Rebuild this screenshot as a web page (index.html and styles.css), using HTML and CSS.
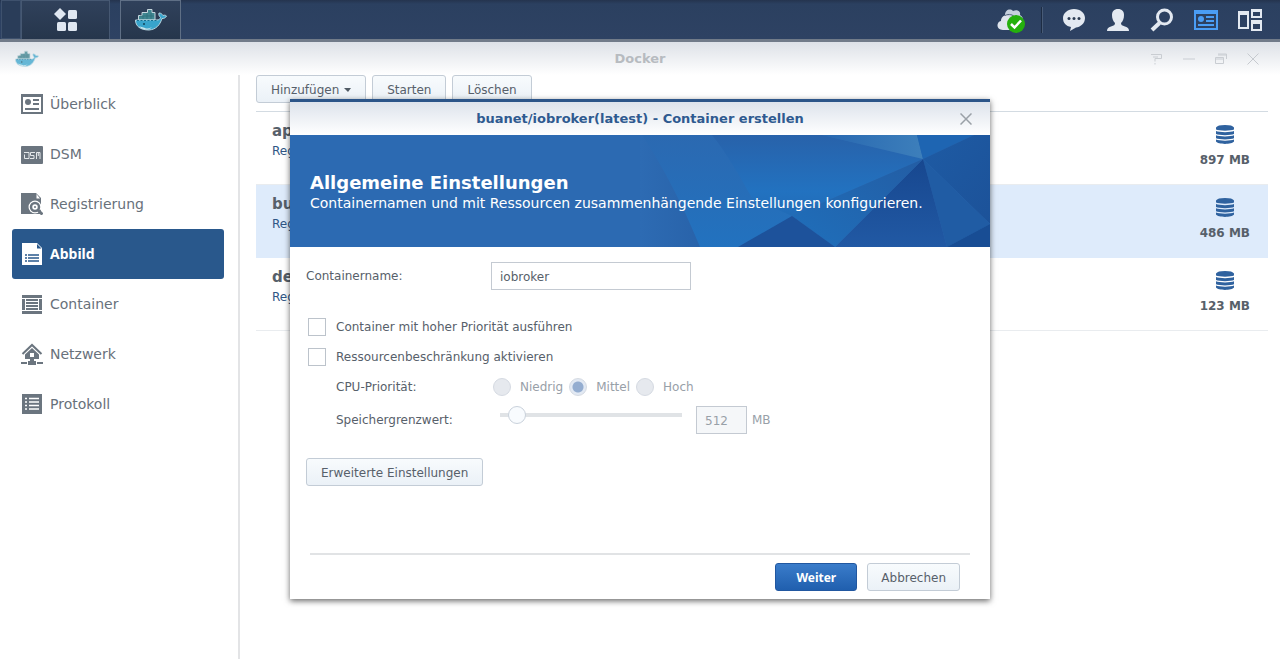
FILE: index.html
```html
<!DOCTYPE html>
<html lang="de">
<head>
<meta charset="utf-8">
<title>Docker</title>
<link rel="stylesheet" href="styles.css">
</head>
<body>
<svg class="defs" width="0" height="0" aria-hidden="true">
  <defs>
    <symbol id="whale" viewBox="0 0 32 24">
      <path d="M3.500 12V7.500H7V4.500h5.500V1.500H17v3h3v7.500z" fill="#3f8691" stroke="#c4d5dc" stroke-width="1"/>
      <path d="M8 8v3M12 5v6M16 5v6M5 8h14" stroke="#2b6d7a" stroke-width=".7"/>
      <path d="M.5 12H22c2 0 3-1 3.500-2.500-1.500-1.500-2-3-1.500-4.500 2 0 3 1 4 2.500 1-.5 2.500-.5 3.500.5-1 2-2.500 2.500-4.500 2.500-2 6.500-6 11-13 11.500C5 22 .5 18 .5 12z" fill="#38a4cc" stroke="#b9d6e0" stroke-width="1"/>
      <path d="M2 12.500h20" stroke="#177091" stroke-dasharray="2 1.500"/>
      <path d="M4 18c2 1.500 5 1 7 2.500 2.500 0 4-.5 6-1.500-2 2-4 2.700-6.500 2.500-3-.3-5-1.500-6.500-3.500z" fill="#cbe6ed"/>
      <circle cx="9" cy="16" r="1" fill="#124558"/>
    </symbol>
    <symbol id="disk" viewBox="0 0 18 19">
      <path d="M0 2.500C1 .8 4 0 9 0s8 .8 9 2.500v2C15 6 3 6 0 4.500zM0 6c3 1.500 15 1.500 18 0v3c-3 1.500-15 1.500-18 0zM0 10.300c3 1.500 15 1.500 18 0v3c-3 1.500-15 1.500-18 0zM0 14.500c3 1.500 15 1.500 18 0v2c-2 3.200-16 3.200-18 0z" fill="#2f629f"/>
    </symbol>
  </defs>
</svg>

<header class="taskbar">
  <span class="task-edge"></span>
  <button class="task task-menu" aria-label="Hauptmenü">
    <svg width="24" height="24" viewBox="0 0 24 24" fill="#dfe7f1"><path d="M6 0l6 6-6 6-6-6z"/><rect x="14" y="2" width="9" height="9" rx="1.500"/><rect x="3" y="14" width="9" height="9" rx="1.500"/><rect x="14" y="14" width="9" height="9" rx="1.500"/></svg>
  </button>
  <button class="task task-app" aria-label="Docker öffnen"><svg width="32" height="24"><use href="#whale"/></svg></button>
  <div class="tray">
    <button class="tray-btn" aria-label="Cloud-Status">
      <svg width="30" height="28" viewBox="0 0 30 28"><path d="M8 9c0-5 5-7 8-4 4-2 8 0 7 4 4 2 4 7 1 9H10z" fill="#c6d0dd"/><path d="M6 24c-7 0-7-8-2-9 0-5 5-7 9-4 5-2 9 1 8 6l-1 7z" fill="#dfe5ed"/><path d="M8 9.500c4-2 8-1 10 2" stroke="#53647c" fill="none"/><circle cx="19" cy="18" r="9" fill="#25b00d"/><path d="M14 18l3.500 3.500L24 14.500" fill="none" stroke="#fff" stroke-width="2.500"/></svg>
    </button>
    <span class="tray-sep"></span>
    <button class="tray-btn" aria-label="Chat"><svg width="24" height="24" viewBox="0 0 24 24"><path d="M12 1c6.500 0 11 4 11 9 0 6-5 9-9 9.500L8 23l1-4C4 18 1 15 1 10c0-5 5-9 11-9z" fill="#e3e9f1"/><circle cx="7" cy="10.500" r="1.500" fill="#2b3b52"/><circle cx="12" cy="10.500" r="1.500" fill="#2b3b52"/><circle cx="17" cy="10.500" r="1.500" fill="#2b3b52"/></svg></button>
    <button class="tray-btn" aria-label="Optionen"><svg width="24" height="24" viewBox="0 0 24 24"><path d="M12 1c4 0 6 2.500 6 6s-1 6-3 8c0 2 1 2.500 4 3.500 3 1 4 2 4 4.500H1c0-2.500 1-3.500 4-4.500 3-1 4-1.500 4-3.500-2-2-3-4.500-3-8s2-6 6-6z" fill="#e3e9f1"/></svg></button>
    <button class="tray-btn" aria-label="Suche"><svg width="24" height="24" viewBox="0 0 24 24" fill="none" stroke="#e3e9f1"><circle cx="14.500" cy="9" r="7" stroke-width="3"/><path d="M9.500 15L2 22" stroke-width="4"/></svg></button>
    <button class="tray-btn" aria-label="Widgets"><svg width="24" height="22" viewBox="0 0 24 22"><path d="M0 1h24v20H0zM2 5v14h20V5z" fill="#4a9df5" fill-rule="evenodd"/><circle cx="7" cy="10" r="3" fill="#4a9df5"/><path d="M12 8h8M12 12h8M4 16h16" stroke="#4a9df5" stroke-width="2"/></svg></button>
    <button class="tray-btn" aria-label="Fensterübersicht"><svg width="24" height="24" viewBox="0 0 24 24" fill="#e3e9f1" fill-rule="evenodd"><path d="M0 3h11v18H0zM2 7v12h7V7zM13 1h11v9H13zM15 4v4h7V4zM13 12h11v11H13zM15 16v5h7v-5z"/></svg></button>
  </div>
</header>

<main class="window">
  <div class="window-head">
    <svg class="window-logo" width="24" height="18"><use href="#whale"/></svg>
    <h1 class="window-title">Docker</h1>
    <div class="window-tools">
      <button aria-label="Hilfe"><svg width="12" height="12" viewBox="0 0 12 12"><path d="M0 1.500h10.500v4H4v3M4 10v1.500M2 4h5" stroke="#c9cdd2" stroke-width="1" fill="none"/></svg></button>
      <button aria-label="Minimieren"><svg width="12" height="12" viewBox="0 0 12 12"><path d="M0 6h12" stroke="#c9cdd2"/></svg></button>
      <button aria-label="Wiederherstellen"><svg width="12" height="12" viewBox="0 0 12 12"><path d="M3 1h8.500v5M3 2h8M.5 4.500h8v6h-8zM.5 6h8" stroke="#c9cdd2" fill="none"/></svg></button>
      <button aria-label="Schließen"><svg width="12" height="12" viewBox="0 0 12 12"><path d="M.5.5l11 11M11.500.5l-11 11" stroke="#c6cacf"/></svg></button>
    </div>
  </div>

  <div class="window-body">
    <nav class="sidebar">
      <a class="nav-item" href="#ueberblick"><svg width="22" height="22" viewBox="0 0 22 22" fill="#6b757f"><path d="M0 1h22v20H0zM2 4v15h18V4z" fill-rule="evenodd"/><circle cx="7" cy="9" r="3"/><path d="M12 6h6v2h-6zM12 10h6v2h-6zM4 15h14v2H4z"/></svg>Überblick</a>
      <a class="nav-item" href="#dsm"><svg width="22" height="22" viewBox="0 0 22 22"><rect y="3" width="22" height="18" rx="1" fill="#6b757f"/><path d="M3 9.500h5v6H3.500v-4M14 9.500H9.500v3h3.500v3H9M15.500 16V9.500H19V16M17.300 9.500V13" fill="none" stroke="#e4e8eb"/></svg>DSM</a>
      <a class="nav-item" href="#registrierung"><svg width="22" height="22" viewBox="0 0 22 22"><path d="M0 0h15l5 5v16H0z" fill="#6b757f"/><path d="M15.500 1v4.500H19z" fill="#fff"/><circle cx="14" cy="14" r="6.500" fill="#fff"/><circle cx="14" cy="14" r="4" fill="none" stroke="#6b757f" stroke-width="2.500"/><circle cx="14" cy="14" r="1" fill="#6b757f"/><path d="M17 17l4.500 4.500" stroke="#6b757f" stroke-width="3"/></svg>Registrierung</a>
      <a class="nav-item nav-item-active" href="#abbild"><svg width="22" height="22" viewBox="0 0 22 22"><path d="M1 0h15l5 5v17H1z" fill="#fff"/><path d="M16 1v4.500h4.500z" fill="#29588c"/><path d="M4 12h2M7 12h11M4 15h2M7 15h11M4 18h2M7 18h11" stroke="#29588c" stroke-width="1.500"/></svg>Abbild</a>
      <a class="nav-item" href="#container"><svg width="22" height="22" viewBox="0 0 22 22" fill="#6b757f"><path d="M1 2h20v3H1zM1 18h20v3H1zM1 6h3v11H1zM18 6h3v11h-3zM5 6h12v2H5zM5 9h12v2H5zM5 12h12v2H5zM5 15h12v2H5z"/></svg>Container</a>
      <a class="nav-item" href="#netzwerk"><svg width="22" height="22" viewBox="0 0 22 22"><path d="M1.500 11L11 2l9.500 9" fill="none" stroke="#6b757f" stroke-width="2"/><path d="M11 5l7 6.500V16h-5v2H9v-2H4v-4.500zM9 10v4h4v-4z" fill="#6b757f" fill-rule="evenodd"/><path d="M0 20h6M16 20h6" stroke="#6b757f" stroke-width="2"/><path d="M7 18h8v4H7z" fill="#6b757f"/></svg>Netzwerk</a>
      <a class="nav-item" href="#protokoll"><svg width="22" height="22" viewBox="0 0 22 22"><path d="M1 1h20v20H1z" fill="#6b757f"/><path d="M4 5.500h2M8 5.500h10M4 9h2M8 9h10M4 12.500h2M8 12.500h10M4 16h2M8 16h10" stroke="#fff" stroke-width="1.700"/></svg>Protokoll</a>
    </nav>

    <section class="content">
      <div class="toolbar">
        <button class="btn">Hinzufügen <span class="caret"></span></button>
        <button class="btn">Starten</button>
        <button class="btn">Löschen</button>
      </div>
      <ul class="images">
        <li class="image"><div><h2 class="image-name">ap</h2><a class="image-link" href="#ap">Reg</a></div><div class="image-size"><svg width="18" height="19"><use href="#disk"/></svg>897 MB</div></li>
        <li class="image image-selected"><div><h2 class="image-name">bu</h2><a class="image-link" href="#bu">Reg</a></div><div class="image-size"><svg width="18" height="19"><use href="#disk"/></svg>486 MB</div></li>
        <li class="image"><div><h2 class="image-name">de</h2><a class="image-link" href="#de">Reg</a></div><div class="image-size"><svg width="18" height="19"><use href="#disk"/></svg>123 MB</div></li>
      </ul>
    </section>
  </div>
</main>

<section class="dialog" role="dialog" aria-labelledby="dialog-title">
  <header class="dialog-head">
    <h2 class="dialog-title" id="dialog-title">buanet/iobroker(latest) - Container erstellen</h2>
    <button class="dialog-close" aria-label="Dialog schließen"><svg width="12" height="12" viewBox="0 0 12 12"><path d="M.5.5l11 11M11.500.5l-11 11" stroke="#9aa0a7" stroke-width="1.500"/></svg></button>
  </header>
  <div class="banner">
    <svg class="banner-art" width="350" height="112" viewBox="0 0 350 112" aria-hidden="true">
      <defs>
        <linearGradient id="g0" x1="0" y1="0" x2="1" y2="0"><stop offset="0" stop-color="#2d6bb3"/><stop offset="1" stop-color="#2862a9"/></linearGradient>
        <linearGradient id="g1" x1="0" y1="0" x2="0" y2="1"><stop offset="0" stop-color="#2b69b1"/><stop offset="1" stop-color="#2272bf"/></linearGradient>
        <linearGradient id="g2" x1="0" y1="0" x2="0" y2="1"><stop offset="0" stop-color="#2862aa"/><stop offset=".7" stop-color="#2272c0"/><stop offset="1" stop-color="#216bb6"/></linearGradient>
        <linearGradient id="g3" x1="0" y1="0" x2="0" y2="1"><stop offset="0" stop-color="#17478f"/><stop offset="1" stop-color="#2159a4"/></linearGradient>
        <linearGradient id="g4" x1="1" y1="0" x2="0" y2="1"><stop offset="0" stop-color="#235da4"/><stop offset="1" stop-color="#1f6fbb"/></linearGradient>
        <linearGradient id="g5" x1="0" y1="0" x2="1" y2="0"><stop offset="0" stop-color="#2767b0"/><stop offset="1" stop-color="#3d7fbb"/></linearGradient>
        <linearGradient id="g6" x1="0" y1="0" x2="1" y2="1"><stop offset="0" stop-color="#1e5ba4"/><stop offset="1" stop-color="#1c5299"/></linearGradient>
      </defs>
      <path d="M0 0h350v112H0z" fill="#2c6ab2"/>
      <path d="M0 0h10l55 112H0z" fill="url(#g0)"/>
      <path d="M2 0h98l52 82-54 30H60C44 72 22 30 2 0z" fill="url(#g1)"/>
      <path d="M72 0h110l101 24-131 57-40-18C100 42 88 20 72 0z" fill="url(#g2)"/>
      <path d="M182 0h95l6 24z" fill="url(#g5)"/>
      <path d="M277 0h57l-51 24z" fill="#1e65b2"/>
      <path d="M334 0h16v89l-67-65z" fill="url(#g6)"/>
      <path d="M283 24l67 65-43 23z" fill="#205ca4"/>
      <path d="M283 24l24 88H195z" fill="url(#g3)"/>
      <path d="M283 24L195 112l-43-31z" fill="url(#g4)"/>
      <path d="M152 81l43 31H98z" fill="#1d529b"/>
      <path d="M307 112l43-23v23z" fill="#184d94"/>
    </svg>
    <h3 class="banner-title">Allgemeine Einstellungen</h3>
    <p class="banner-text">Containernamen und mit Ressourcen zusammenhängende Einstellungen konfigurieren.</p>
  </div>

  <form class="form">
    <div class="row">
      <label class="row-label" for="name">Containername:</label>
      <input class="text" id="name" type="text" value="iobroker">
    </div>
    <div class="checks">
      <label class="check"><input type="checkbox">Container mit hoher Priorität ausführen</label>
      <label class="check"><input type="checkbox">Ressourcenbeschränkung aktivieren</label>
    </div>
    <div class="row row-sub row-cpu" role="radiogroup" aria-labelledby="cpu">
      <span class="row-label" id="cpu">CPU-Priorität:</span>
      <div class="radios">
        <label class="radio"><input type="radio" name="cpu" disabled>Niedrig</label>
        <label class="radio"><input type="radio" name="cpu" checked disabled>Mittel</label>
        <label class="radio"><input type="radio" name="cpu" disabled>Hoch</label>
      </div>
    </div>
    <div class="row row-sub">
      <label class="row-label" for="limit">Speichergrenzwert:</label>
      <input class="slider" id="limit" type="range" min="0" max="100" value="5" disabled>
      <input class="text text-amount" type="text" value="512" aria-label="Speichergrenzwert in MB" disabled>
      <span class="unit">MB</span>
    </div>
    <button class="btn btn-advanced" type="button">Erweiterte Einstellungen</button>
  </form>

  <footer class="dialog-foot">
    <button class="btn btn-primary">Weiter</button>
    <button class="btn">Abbrechen</button>
  </footer>
</section>
</body>
</html>
```
FILE: styles.css
```css
* { box-sizing: border-box; }

body {
  margin: 0;
  min-height: 100vh;
  display: flex;
  flex-direction: column;
  background: #fff;
  color: #57606a;
  font: 12px/20px "DejaVu Sans", sans-serif;
}

button, input { font: inherit; color: inherit; }
button { padding: 0; border: 0; background: none; }
h1, h2, h3, p, ul { margin: 0; padding: 0; }
a { text-decoration: none; }
svg { display: block; flex: none; }
.defs { position: absolute; }

/* Taskbar */
.taskbar {
  display: flex;
  height: 42px;
  padding-left: 1px;
  background: linear-gradient(#25344e, #2b4060 4px, #2e4263);
  border-bottom: 3px solid #717b89;
}
.task-edge {
  width: 20px;
  border: 1px solid #3e516d;
  background: #2a3d59;
}
.task {
  display: flex;
  align-items: center;
  justify-content: center;
  border: 1px solid #465872;
  border-bottom: 0;
  background: linear-gradient(#30415b, #26364c);
}
.task-menu { width: 89px; }
.task-app { width: 61px; margin-left: 10px; border-color: #5f6f85; }
.tray {
  display: flex;
  align-items: center;
  gap: 20px;
  margin-left: auto;
  padding-right: 18px;
}
.tray-sep { width: 2px; height: 26px; margin: 0 -1px 0 -6px; background: #1d2c43; border-right: 1px solid #485b77; }

/* Application window */
.window { flex: 1; display: flex; flex-direction: column; }
.window-head {
  display: grid;
  grid-template-columns: 1fr auto 1fr;
  align-items: center;
  height: 33px;
  padding: 0 21px 0 15px;
  background: linear-gradient(#dde1e7, #fff);
}
.window-logo { opacity: .75; }
.window-title { padding-left: 6px; font-size: 13px; line-height: 20px; color: #b7bbc0; }
.window-tools { display: flex; justify-content: flex-end; gap: 20px; }
.window-body { flex: 1; display: flex; }

.sidebar {
  width: 240px;
  padding: 4px 14px 0 12px;
  border-right: 2px solid #e3e4e6;
}
.nav-item {
  display: flex;
  align-items: center;
  gap: 7px;
  height: 50px;
  padding-left: 9px;
  border-radius: 3px;
  font-size: 14px;
  color: #68717b;
}
.nav-item-active {
  background: #29588c;
  color: #fff;
  font-family: "Noto Sans", sans-serif;
  font-weight: 700;
}

.content { flex: 1; padding: 0 12px 0 16px; }
.toolbar { display: flex; gap: 6px; }
.btn {
  height: 28px;
  padding: 1px 14px 0;
  border: 1px solid #c3ccd6;
  border-radius: 3px;
  background: linear-gradient(#f8fbfd, #ebf1f7);
}
.caret {
  display: inline-block;
  margin-left: 1px;
  border: 4px solid transparent;
  border-top: 4px solid #505a64;
  border-bottom: 0;
  border-right-width: 3px;
  vertical-align: middle;
}
.images { margin-top: 8px; border-top: 1px solid #d3dbe2; list-style: none; }
.image {
  display: flex;
  justify-content: space-between;
  height: 73px;
  padding: 9px 18px 0 16px;
  border-bottom: 1px solid #e9ecef;
}
.image-selected { background: #deebfb; border-color: #deebfb; }
.image-name { font-size: 15px; line-height: 20px; }
.image-link { color: #2f5685; }
.image-size {
  display: flex;
  flex-direction: column;
  align-items: center;
  gap: 6px;
  padding-top: 4px;
  font-weight: 700;
}

/* Dialog floats over the application window */
.dialog {
  position: absolute;
  top: 99px;
  left: 50%;
  width: 700px;
  transform: translateX(-50%);
  border-top: 3px solid #2c5589;
  background: #fff;
  box-shadow: 0 2px 6px rgba(0, 0, 0, .6);
}
.dialog-head {
  display: flex;
  align-items: center;
  height: 33px;
  padding: 0 18px 0 30px;
  background: linear-gradient(#dde3ec, #fff);
}
.dialog-title { flex: 1; text-align: center; font-size: 13px; color: #2f5a90; }
.banner {
  position: relative;
  height: 112px;
  padding: 37px 20px 0;
  background: #2c6ab2;
  color: #fff;
}
.banner-art { position: absolute; top: 0; right: 0; }
.banner-title { position: relative; font-size: 18px; line-height: 21px; }
.banner-text { position: relative; font-size: 14px; line-height: 20px; }

.form { padding: 15px 16px 0; }
.row { display: flex; align-items: center; height: 28px; }
.row-label { width: 185px; }
.row-sub { padding-left: 30px; }
.row-sub .row-label { width: 155px; }
.text {
  width: 200px;
  height: 28px;
  padding: 1px 8px 0;
  border: 1px solid #c4cad2;
  border-radius: 0;
  background: #fff;
}
.text-amount { width: 51px; margin-left: 14px; background: #f5f7f9; color: #98a0a8; }
.unit { margin-left: 5px; color: #98a0a8; }
.checks { padding: 22px 0 0 2px; }
.check { display: flex; align-items: center; gap: 10px; height: 30px; }
.check input {
  appearance: none;
  width: 18px;
  height: 18px;
  margin: 0;
  border: 1px solid #bcc3cb;
  background: #fff;
}
.row-cpu { height: 30px; margin-bottom: 4px; }
.radios { display: flex; gap: 6px; padding-left: 2px; color: #98a0a8; }
.radio { display: flex; align-items: center; gap: 9px; }
.radio input {
  appearance: none;
  width: 18px;
  height: 18px;
  margin: 0;
  border: 1px solid #d5dae2;
  border-radius: 50%;
  background: #e6e9ee;
}
.radio input:checked { background: radial-gradient(circle, #94add0 5px, #e2e9f3 6px); }
.slider {
  appearance: none;
  width: 182px;
  height: 18px;
  margin: 0 0 10px 9px;
  border-radius: 2px;
  background: linear-gradient(#e0e3e6, #e0e3e6) center / 100% 4px no-repeat;
}
.slider::-webkit-slider-thumb {
  appearance: none;
  width: 18px;
  height: 18px;
  border: 1px solid #c9d1db;
  border-radius: 50%;
  background: #f8fbfe;
}
.btn-advanced { margin-top: 24px; }
.dialog-foot {
  display: flex;
  justify-content: flex-end;
  gap: 10px;
  margin: 67px 20px 0;
  padding: 8px 10px 8px 0;
  border-top: 2px solid #e1e3e5;
}
.dialog-foot .btn { padding: 1px 13px 0; }
.dialog-foot .btn-primary {
  min-width: 82px;
  border-color: #2157a0;
  background: linear-gradient(#3a7cca, #205fae);
  color: #fff;
  font-family: "Noto Sans", sans-serif;
  font-weight: 700;
}
```
